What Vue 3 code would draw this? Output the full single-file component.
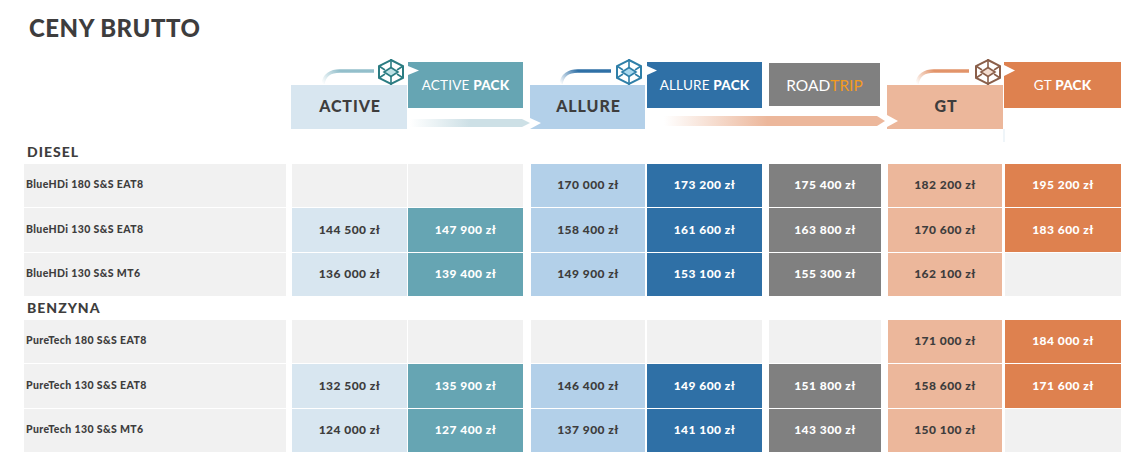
<script setup>
const columns = ['active', 'apack', 'allure', 'alpack', 'road', 'gt', 'gtpack']
const sections = [
  {
    name: 'DIESEL',
    rows: [
      { label: 'BlueHDi 180 S&S EAT8', prices: ['', '', '170 000 zł', '173 200 zł', '175 400 zł', '182 200 zł', '195 200 zł'] },
      { label: 'BlueHDi 130 S&S EAT8', prices: ['144 500 zł', '147 900 zł', '158 400 zł', '161 600 zł', '163 800 zł', '170 600 zł', '183 600 zł'] },
      { label: 'BlueHDi 130 S&S MT6', prices: ['136 000 zł', '139 400 zł', '149 900 zł', '153 100 zł', '155 300 zł', '162 100 zł', ''] },
    ],
  },
  {
    name: 'BENZYNA',
    rows: [
      { label: 'PureTech 180 S&S EAT8', prices: ['', '', '', '', '', '171 000 zł', '184 000 zł'] },
      { label: 'PureTech 130 S&S EAT8', prices: ['132 500 zł', '135 900 zł', '146 400 zł', '149 600 zł', '151 800 zł', '158 600 zł', '171 600 zł'] },
      { label: 'PureTech 130 S&S MT6', prices: ['124 000 zł', '127 400 zł', '137 900 zł', '141 100 zł', '143 300 zł', '150 100 zł', ''] },
    ],
  },
]
const icons = [
  { x: 391, stroke: '#2b7c82', glow: '#bfe3e6' },
  { x: 629, stroke: '#2f7fa8', glow: '#a9d8ee' },
  { x: 988, stroke: '#8a5f4a', glow: '#f3ddd0' },
]
const curves = [
  { d: 'M323 84C324 75 331 71 340 71L374 71', id: 'c1' },
  { d: 'M561 84C562 75 569 71 578 71L611 71', id: 'c2' },
  { d: 'M917 84C918 75 925 71 934 71L969 71', id: 'c3' },
]
</script>

<template>
  <div class="page">
    <h1 class="title">CENY BRUTTO</h1>

    <div class="header">
      <div class="cells">
        <div class="spacer col-label"></div>
        <div class="hcell col-active bg-active main head-active">ACTIVE</div>
        <div class="hcell col-apack bg-apack pack">ACTIVE <b>PACK</b></div>
        <div class="hcell col-allure bg-allure main head-allure">ALLURE</div>
        <div class="hcell col-alpack bg-alpack pack">ALLURE <b>PACK</b></div>
        <div class="hcell col-road bg-road road">ROAD<span class="trip">TRIP</span></div>
        <div class="hcell col-gt bg-gt main head-gt">GT</div>
        <div class="hcell col-gtpack bg-gtpack pack head-gtpack">GT <b>PACK</b></div>
      </div>

      <svg class="overlay" width="1147" height="90" viewBox="0 55 1147 90">
        <defs>
          <linearGradient id="c1" gradientUnits="userSpaceOnUse" x1="323" y1="84" x2="340" y2="71">
            <stop offset="0" stop-color="#fff" /><stop offset="1" stop-color="#93bfcb" />
          </linearGradient>
          <linearGradient id="c2" gradientUnits="userSpaceOnUse" x1="561" y1="84" x2="578" y2="71">
            <stop offset="0" stop-color="#fff" /><stop offset="1" stop-color="#2f70a6" />
          </linearGradient>
          <linearGradient id="c3" gradientUnits="userSpaceOnUse" x1="917" y1="84" x2="934" y2="71">
            <stop offset="0" stop-color="#fff" /><stop offset="1" stop-color="#e2946a" />
          </linearGradient>
          <linearGradient id="b1" x1="0" x2="1" y1="0" y2="0">
            <stop offset="0" stop-color="#fff" /><stop offset="0.5" stop-color="#cde0e6" />
          </linearGradient>
          <linearGradient id="b2" x1="0" x2="1" y1="0" y2="0">
            <stop offset="0.06" stop-color="#fff" /><stop offset="0.5" stop-color="#ecb79b" />
          </linearGradient>
        </defs>

        <path v-for="c in curves" :key="c.id" :d="c.d" fill="none" :stroke="`url(#${c.id})`" stroke-width="3.5" />

        <polygon points="410,119 522,119 530,123 522,127 410,127" fill="url(#b1)" />
        <polygon points="650,116 877,116 885,121 877,126 650,126" fill="url(#b2)" />

        <polygon points="408,66 419,70.5 408,75" fill="#fff" />
        <polygon points="647,66 657,70.5 647,75" fill="#fff" />
        <polygon points="1004,65 1015,70.5 1004,76" fill="#fff" />
        <polygon points="530,118 541,123 530,129" fill="#fff" />
        <polygon points="887,115 898,121 887,127" fill="#fff" />

        <rect x="1003" y="129" width="2" height="13" fill="#eff5f9" />

        <g v-for="i in icons" :key="i.x" :transform="`translate(${i.x} 72)`" fill="none" :stroke="i.stroke" stroke-width="2">
          <polygon points="0,-12 12,-6 12,6 0,12 -12,6 -12,-6" />
          <polygon points="0,-4.5 7,0 0,4.5 -7,0" :fill="i.glow" stroke-width="1.6" />
          <path d="M0,-13V-4.5M0,4.5V13M-12,-6L-6,-2M12,-6L6,-2M-12,6L-6,2M12,6L6,2" stroke-width="1.6" />
        </g>
      </svg>
    </div>

    <section v-for="s in sections" :key="s.name" class="section">
      <h2 class="section-name">{{ s.name }}</h2>
      <div v-for="r in s.rows" :key="r.label" class="cells row">
        <div class="label col-label">{{ r.label }}</div>
        <div
          v-for="(p, n) in r.prices"
          :key="n"
          class="price"
          :class="[`col-${columns[n]}`, p ? `bg-${columns[n]}` : 'empty', { light: p && [1, 3, 4, 6].includes(n) }]"
        >{{ p }}</div>
      </div>
    </section>
  </div>
</template>

<style>
html, body { background: #fff; }
</style>

<style scoped>
.page {
  position: relative;
  width: 1147px;
  height: 467px;
  overflow: hidden;
  background: #fff;
  font-family: "Lato", "Open Sans", sans-serif;
  color: #3e3d3d;
}
.title {
  margin: 0;
  padding: 13px 0 0 29px;
  height: 57px;
  box-sizing: border-box;
  font-size: 24px;
  line-height: 30px;
  font-weight: 900;
  letter-spacing: 0.5px;
}
.header {
  position: relative;
  height: 73px;
}
.cells {
  display: flex;
  padding-left: 24px;
}
.header .cells {
  height: 72px;
  padding-top: 5px;
  box-sizing: border-box;
}
.overlay {
  position: absolute;
  left: 0;
  top: -2px;
  pointer-events: none;
}
.col-label { width: 262px; flex: none; }
.col-active { width: 115px; margin-left: 6px; flex: none; }
.col-apack { width: 115px; margin-left: 1px; flex: none; }
.col-allure { width: 114px; margin-left: 8px; flex: none; }
.col-alpack { width: 115px; margin-left: 2px; flex: none; }
.col-road { width: 112px; margin-left: 7px; flex: none; }
.col-gt { width: 114px; margin-left: 7px; flex: none; }
.col-gtpack { width: 116px; margin-left: 3px; flex: none; }

.head-active { width: 116px; margin-left: 5px; }
.head-allure { width: 115px; margin-left: 7px; }
.head-gt { width: 116px; margin-left: 6px; }
.head-gtpack { width: 117px; margin-left: 1px; }
.header .col-road { width: 111px; margin-right: 1px; }

.bg-active { background: #d8e6f0; }
.bg-apack { background: #66a5b3; }
.bg-allure { background: #b3d0e9; }
.bg-alpack { background: #2f70a6; }
.bg-road { background: #808080; }
.bg-gt { background: #ecb79b; }
.bg-gtpack { background: #de814f; }
.empty { background: #f1f1f1; }

.hcell {
  display: flex;
  align-items: center;
  justify-content: center;
  white-space: pre;
}
.main {
  height: 44px;
  margin-top: 23px;
  padding: 0 0 3px 2px;
  box-sizing: border-box;
  font-size: 16px;
  font-weight: 900;
  letter-spacing: 0.9px;
}
.pack {
  height: 46px;
  color: #fff;
  font-size: 13.5px;
  letter-spacing: 0.2px;
}
.pack b { font-weight: 900; }
.road {
  height: 43px;
  margin-top: 1px;
  color: #fff;
  font-size: 15.5px;
}
.trip { color: #f39a1e; }

.section { padding-top: 2px; }
.header + .section { padding-top: 13px; }
.section-name {
  margin: 0;
  padding-left: 27px;
  height: 21px;
  font-size: 14px;
  line-height: 18px;
  font-weight: 900;
  letter-spacing: 1px;
}
.row { height: 43px; margin-bottom: 1px; }
.row:nth-child(3) { height: 44px; }
.label {
  display: flex;
  align-items: center;
  padding: 0 0 3px 2px;
  box-sizing: border-box;
  background: #f1f1f1;
  font-size: 10.5px;
  font-weight: 900;
  letter-spacing: 0.38px;
}
.price {
  display: flex;
  align-items: center;
  justify-content: center;
  padding-bottom: 2px;
  box-sizing: border-box;
  font-size: 12px;
  font-weight: 900;
  letter-spacing: 0.45px;
  white-space: pre;
}
.light { color: #fff; }
</style>
